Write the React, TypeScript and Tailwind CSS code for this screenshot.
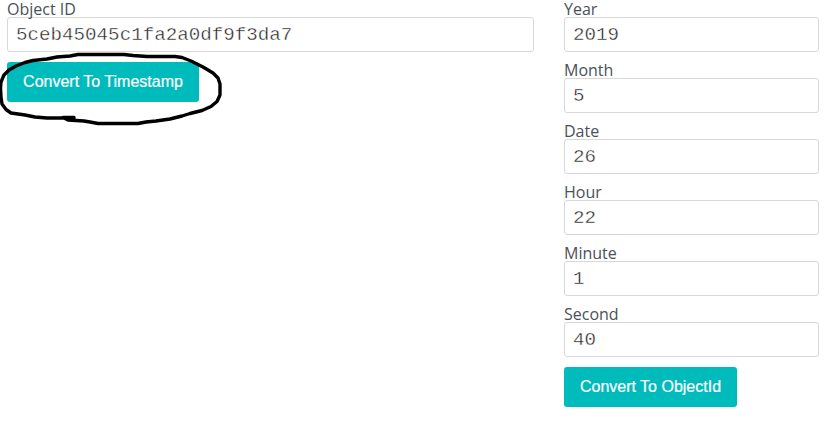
type FieldProps = { label: string; value: string };

function Field({ label, value }: FieldProps) {
  return (
    <label className="mb-[10px] block font-['Open_Sans',sans-serif] text-base leading-4 text-[#4b5158]">
      <span className="block h-4 whitespace-nowrap">{label}</span>
      <input
        type="text"
        defaultValue={value}
        className="block h-[35px] w-full rounded-[3px] border border-[#d8d8d8] bg-white px-2 font-['Liberation_Mono',monospace] text-[19.2px] leading-[22px] text-[#222] outline-none [-webkit-text-stroke:0.4px_white]"
      />
    </label>
  );
}

function ConvertButton({ children, width }: { children: string; width: string }) {
  return (
    <button
      type="button"
      className={`${width} block h-10 rounded-[3px] bg-[#00bbbc] pb-px text-center font-['Liberation_Sans',sans-serif] text-base whitespace-nowrap text-white [-webkit-text-stroke:0.2px_white]`}
    >
      {children}
    </button>
  );
}

const dateFields: FieldProps[] = [
  { label: "Year", value: "2019" },
  { label: "Month", value: "5" },
  { label: "Date", value: "26" },
  { label: "Hour", value: "22" },
  { label: "Minute", value: "1" },
  { label: "Second", value: "40" },
];

export default function App() {
  return (
    <main className="relative flex h-[423px] w-full items-start gap-[30px] bg-white pt-px pl-[7px]">
      <section className="w-[527px]">
        <Field label="Object ID" value="5ceb45045c1fa2a0df9f3da7" />
        <ConvertButton width="w-[192px]">Convert To Timestamp</ConvertButton>
      </section>
      <section className="w-[255px]">
        {dateFields.map((field) => (
          <Field key={field.label} {...field} />
        ))}
        <ConvertButton width="w-[173px]">Convert To ObjectId</ConvertButton>
      </section>
      {/* Hand-drawn ring around the timestamp button */}
      <svg
        className="pointer-events-none absolute top-0 left-0"
        width="230"
        height="130"
        viewBox="0 0 230 130"
        fill="none"
        stroke="#000"
        strokeWidth="3.4"
        strokeLinecap="round"
        strokeLinejoin="round"
      >
        <path d="M74 117.5L63 117.5L68 120L84 121L90 122L98 123.5L138 123.5L146 122L156 121L170 119L182 116L190 113.5L202 110.5L211 106.5L217 101.5L220 95L220 84L218 78L213 73L203 67L191 61L182 57.5L175 56.5L147 56.5L133 55.5L124 54.5L78 54.5L70 56L57 57L47 59L33 60.5L25 62.5L16 66L9 70L4 75L1 82L0.5 88L1 97L2 104L6 109.5L11 113L25 115L35 117L47 118L74 118" />
      </svg>
    </main>
  );
}
